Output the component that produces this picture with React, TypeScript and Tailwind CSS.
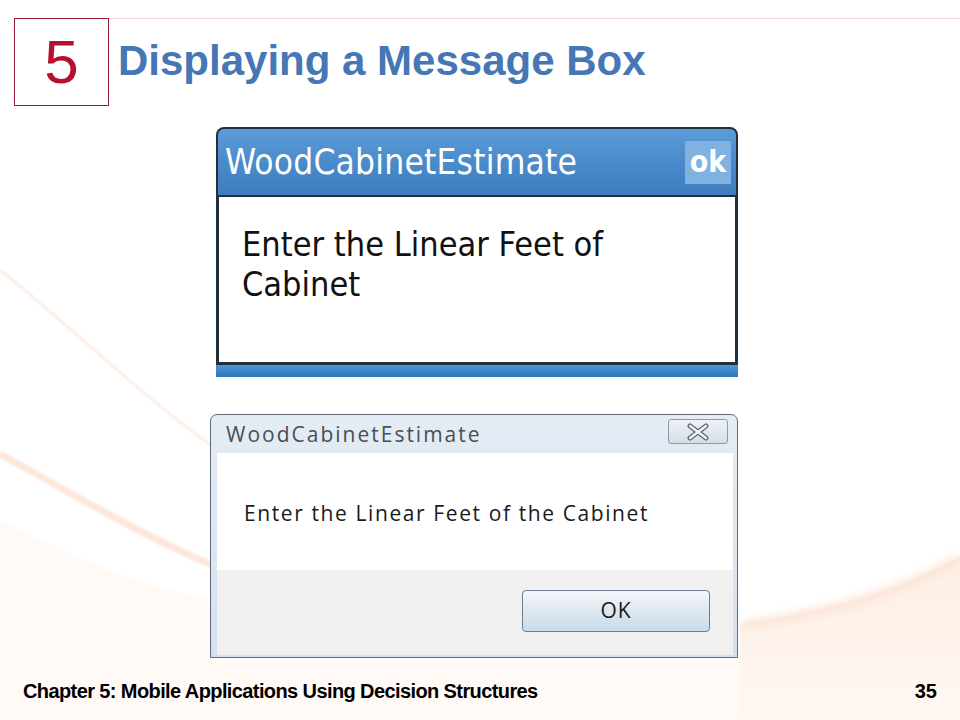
import React from 'react';

// Faint warm swooshes of the slide template
const Backdrop = () => (
  <svg className="absolute inset-0 pointer-events-none" width="960" height="720" viewBox="0 0 960 720">
    <defs>
      <filter id="soft" x="-20%" y="-20%" width="140%" height="140%">
        <feGaussianBlur stdDeviation="4" />
      </filter>
      <filter id="thin" x="-20%" y="-20%" width="140%" height="140%">
        <feGaussianBlur stdDeviation="0.8" />
      </filter>
      <linearGradient id="warm" x1="0" y1="0" x2="0" y2="1">
        <stop offset="0" stopColor="#fdeee3" />
        <stop offset="1" stopColor="#fff8f3" />
      </linearGradient>
    </defs>
    <path d="M0 520 C 80 560, 150 590, 215 600 L 215 720 L 0 720 Z" fill="#fffaf6" />
    <rect x="215" y="660" width="525" height="60" fill="#fffaf6" />
    <path d="M740 624 C 820 612, 900 592, 960 556 L 960 720 L 740 720 Z" fill="url(#warm)" />
    <path d="M740 626 C 820 614, 900 594, 960 558" stroke="#fbe4d4" strokeWidth="8" fill="none" filter="url(#soft)" />
    <path d="M0 270 C 70 325, 140 395, 212 446" stroke="#fbe2d6" strokeWidth="1.8" fill="none" filter="url(#thin)" />
    <path d="M0 454 C 70 492, 140 535, 212 565" stroke="#fde6da" strokeWidth="7" fill="none" filter="url(#thin)" />
  </svg>
);

const MobileBox = () => (
  <div className="w-[522px] h-[250px] flex flex-col rounded-t-[8px] overflow-hidden bg-[#22303e]">
    <div className="h-[66px] mx-[2px] mt-[2px] rounded-t-[6px] bg-gradient-to-b from-[#5b9bd7] via-[#4a8bcb] to-[#3d7dbe] flex items-center justify-between pl-[7px] pr-[5px]">
      <span className="text-white text-[35px] font-['DejaVu_Sans_Condensed','DejaVu_Sans',sans-serif] tracking-[0.2px]">
        WoodCabinetEstimate
      </span>
      <div className="w-[46px] h-[43px] bg-[#80b2e1] flex items-center justify-center">
        <span className="text-white text-[30px] font-bold font-['DejaVu_Sans_Condensed','DejaVu_Sans',sans-serif] leading-none">ok</span>
      </div>
    </div>
    <div className="mt-[2px] mx-[3px] h-[165px] bg-white pl-[23px] pt-[27px]">
      <p className="text-[#111] text-[34px] leading-[40px] font-['DejaVu_Sans_Condensed','DejaVu_Sans',sans-serif] w-[400px]">
        Enter the Linear Feet of Cabinet
      </p>
    </div>
    <div className="mt-[3px] flex-1 bg-gradient-to-b from-[#4d95d8] to-[#2f74bd]" />
  </div>
);

const DesktopBox = () => (
  <div className="w-[528px] h-[244px] flex flex-col rounded-t-[7px] border border-[#5f6b78] bg-gradient-to-b from-[#e4ecf4] to-[#d4e1ee] overflow-hidden">
    <div className="h-[38px] flex items-center justify-between pl-[15px] pr-[9px] pt-[1px]">
      <span className="text-[#4a4f55] text-[21px] tracking-[2px] font-['Open_Sans',sans-serif]">WoodCabinetEstimate</span>
      <div className="w-[60px] h-[25px] mt-[-6px] rounded-[3px] border border-[#8e9aa6] bg-gradient-to-b from-[#eef2f6] to-[#d6dee6] flex items-center justify-center">
        <svg width="26" height="18" viewBox="0 0 26 18">
          <path d="M5 3 L21 15 M21 3 L5 15" stroke="#626b75" strokeWidth="5" strokeLinecap="round" />
          <path d="M5 3 L21 15 M21 3 L5 15" stroke="#f4f6f8" strokeWidth="2.2" strokeLinecap="round" />
        </svg>
      </div>
    </div>
    <div className="ml-[6px] mr-[4px] flex-1 flex flex-col">
      <div className="h-[117px] bg-white pl-[27px] flex items-center">
        <span className="text-[#1a1a1a] text-[21px] tracking-[1.6px] font-['Open_Sans',sans-serif] mt-[5px]">
          Enter the Linear Feet of the Cabinet
        </span>
      </div>
      <div className="flex-1 bg-[#f0f0f0] flex justify-end pr-[23px] pt-[20px] mb-[2px]">
        <div className="w-[188px] h-[42px] rounded-[4px] border border-[#6f7f90] bg-gradient-to-b from-[#f3f6f9] via-[#dde8f1] to-[#c7dbea] flex items-center justify-center">
          <span className="text-[#1a1a1a] text-[21px] tracking-[1px] font-['Open_Sans',sans-serif]">OK</span>
        </div>
      </div>
    </div>
  </div>
);

const App: React.FC = () => {
  return (
    <div className="relative w-[960px] h-[720px] overflow-hidden bg-white font-['Liberation_Sans',sans-serif]">
      <Backdrop />
      <div className="relative flex flex-col h-full">
        {/* Slide header */}
        <div className="flex pt-[18px] pl-[14px]">
          <div className="w-[95px] h-[88px] border border-[#9b1b35] flex items-center justify-center">
            <span className="text-[#b3112e] text-[62px] leading-none font-['Liberation_Sans',sans-serif]">5</span>
          </div>
          <div className="flex-1 border-t border-[#f0dada] pl-[9px] pt-[21px]">
            <h1 className="text-[#4577b4] text-[42px] font-bold leading-none font-['Liberation_Sans',sans-serif]">
              Displaying a Message Box
            </h1>
          </div>
        </div>

        <div className="flex flex-col pl-[216px] mt-[21px]">
          <MobileBox />
          <div className="mt-[37px] ml-[-6px]">
            <DesktopBox />
          </div>
        </div>

        {/* Footer */}
        <div className="flex justify-between items-end px-[23px] mt-[18px]">
          <span className="text-black text-[20px] font-bold tracking-[-0.6px] font-['Liberation_Sans_Narrow','Liberation_Sans',sans-serif]">
            Chapter 5: Mobile Applications Using Decision Structures
          </span>
          <span className="text-black text-[20px] font-bold font-['Liberation_Sans_Narrow','Liberation_Sans',sans-serif]">35</span>
        </div>
      </div>
    </div>
  );
};

export default App;
